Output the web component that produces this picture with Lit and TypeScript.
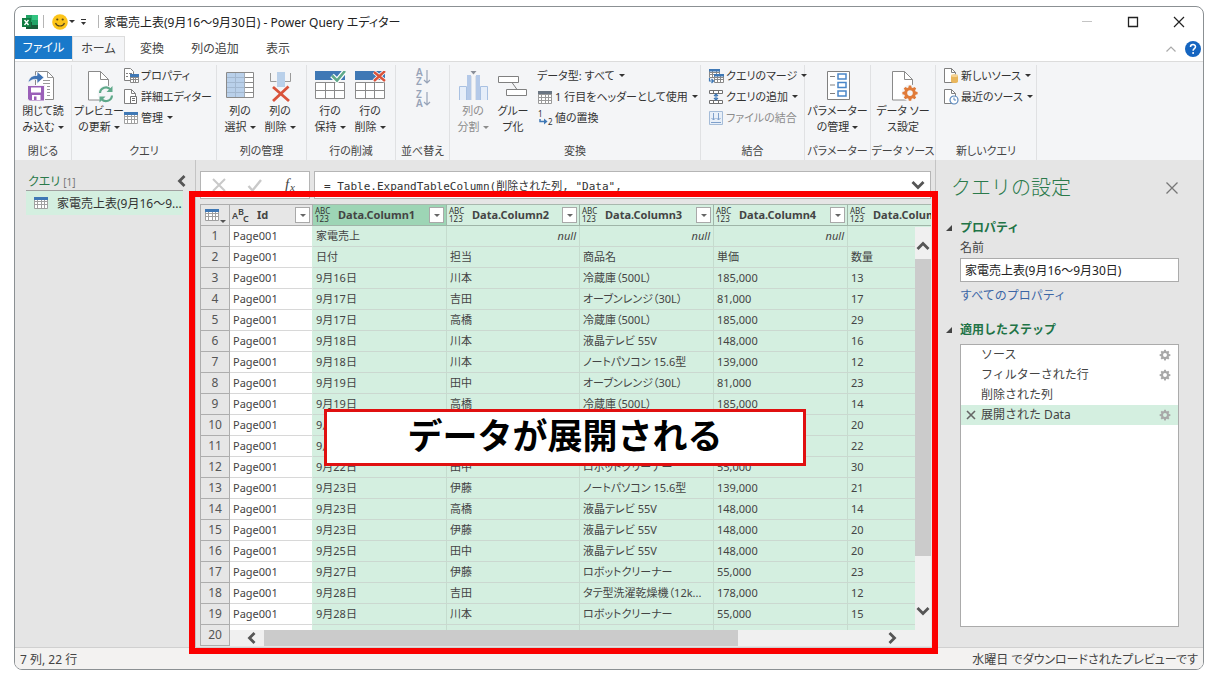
import { LitElement, html, svg, css, nothing } from "lit";
import { customElement, property, state } from "lit/decorators.js";
import { classMap } from "lit/directives/class-map.js";

const grid = (x: number, y: number, w: number, h: number, cols: number, rows: number, stroke = "#8a8a8a") => {
  let d = `M${x} ${y}h${w}v${h}h${-w}z`;
  for (let i = 1; i < cols; i++) d += `M${x + Math.round((w * i) / cols)} ${y}v${h}`;
  for (let i = 1; i < rows; i++) d += `M${x} ${y + Math.round((h * i) / rows)}h${w}`;
  return svg`<path d=${d} fill="#fff" stroke=${stroke}/>`;
};

const gearPath =
  "M6.8 1h2.4l.4 2 1.2.5 1.7-1.1 1.7 1.7-1.1 1.7.5 1.2 2 .4v2.4l-2 .4-.5 1.2 1.1 1.7-1.7 1.7-1.7-1.1-1.2.5-.4 2H6.800l-.4-2-1.200-.5-1.700 1.100-1.700-1.700 1.100-1.700-.5-1.200-2-.4V7.400l2-.4.5-1.200L1.800 4.100l1.700-1.700 1.700 1.100L6.400 3zM8 5.800a2.800 2.800 0 1 0 0 5.600 2.800 2.800 0 0 0 0-5.600z";

const page = svg`<path d="M5.500 .5h12l8 8v20.500h-20z" fill="#fff" stroke="#8a8a8a"/><path d="M17.500 .5v8h8" fill="none" stroke="#8a8a8a"/>`;
const smallPage = svg`<path d="M1.500 .5h7l4 4v10h-11z" fill="#fff" stroke="#808080"/><path d="M8.500 .5v4h4" fill="none" stroke="#808080"/>`;

const big: Record<string, unknown> = {
  close: svg`<path d="M8.500 .5h12l6 6v22h-18z" fill="#fff" stroke="#8a8a8a"/><path d="M20.500 .5v6h6M16 9.500h7M16 12.500h7M20 15.500h3M20 18.500h3M20 21.500h3M20 24.500h3" fill="none" stroke="#9a9a9a"/>
    <path d="M1 12c1-6 5-8 9-7.500V.5l7 6-7 6V8.500c-4-.5-6 .5-9 3.500z" fill="#3f74b5" stroke="#f4f5f7" stroke-width=".8"/>
    <path d="M.5 14.500h17v15.500h-15l-2-2z" fill="#9a5fb8" stroke="#f4f5f7"/><path d="M4 16.500h10v5H4z" fill="#fff"/><path d="M5 24h8.500v5H5z" fill="#fff"/><path d="M7 25.500h2.500V29H7z" fill="#9a5fb8"/>`,
  refresh: svg`${page}<circle cx="23" cy="23" r="8.500" fill="#f4f5f7"/><path d="M17 22a6 6 0 0 1 10.500-3.500M29 24.500a6 6 0 0 1-10.500 3.500" fill="none" stroke="#5fa98a" stroke-width="2.200"/><path d="M29.500 15v6h-6zM16.500 31.500v-6h6z" fill="#5fa98a"/>`,
  choose: svg`${grid(2.5, 1.5, 27, 25, 3, 5)}<path d="M3 2h17.500v24H3z" fill="#b9d0ea"/><path d="M11.500 2v24M3 6.500h17M3 11.500h17M3 16.500h17M3 21.500h17" stroke="#a3b8d0"/>`,
  removeCol: svg`<path d="M6.500 2v8.500h6M26.500 2v8.500h-6" fill="none" stroke="#9a9a9a"/><path d="M13 1h8v15h-8z" fill="#b9d0ea"/><path d="M9 16l16 14M24.500 15.500L9 30" stroke="#d9533b" stroke-width="2.800" fill="none"/>`,
  keepRows: svg`<path d="M1 0h30v9H1z" fill="#3f78b5"/>${grid(1.5, 11.5, 29, 16, 3, 2)}<path d="M18 4.500l5 5L31 0" fill="none" stroke="#fff" stroke-width="5"/><path d="M18 4.500l5 5L31 0" fill="none" stroke="#5fa98a" stroke-width="2.600"/>`,
  removeRows: svg`<path d="M1 0h30v9H1z" fill="#3f78b5"/>${grid(1.5, 11.5, 29, 16, 3, 2)}<path d="M20 1l11 9M31 0L20 10" stroke="#fff" stroke-width="4"/><path d="M20 1l11 9M31 0L20 10" stroke="#d9533b" stroke-width="2.400"/>`,
  split: svg`<path d="M2.500 29V15.500h7V29M23.500 29V15.500h7V29" fill="#e6eef9" stroke="#a9c1e2"/><path d="M10 4h4v25h-4zM19 4h4v25h-4z" fill="#b4c9e8"/><path d="M14.500 5v24M18.500 5v24" stroke="#dce2ea"/><path d="M13.500 0h6l-3 3.500z" fill="#8a8f98"/>`,
  group: svg`<path d="M1.500 5.500h20v6h-20zM9.500 18.500h20v6h-20z" fill="#fff" stroke="#808080"/><path d="M15 11.500l5 7" stroke="#808080"/>`,
  params: svg`<path d="M5.500 .5h22v28h-22z" fill="#fff" stroke="#808080"/><path d="M8 5.500h5M8 14h5M8 22.500h5" stroke="#808080"/><path d="M16 3h8v5h-8zM16 11.500h8v5h-8zM16 20h8v5h-8z" fill="#fff" stroke="#4a86c8" stroke-width="1.500"/>`,
  source: svg`${page}<circle cx="23" cy="22" r="8.500" fill="#f4f5f7"/><g transform="translate(15 13.500)"><path d=${gearPath} fill="#e07b39" fill-rule="evenodd"/></g>`,
};

const small: Record<string, unknown> = {
  props: svg`<path d="M1.500 .5h6l3 3v9h-9z" fill="#fff" stroke="#808080"/><path d="M3 5.500h2M3 8.500h2M6 5.500h3" stroke="#808080"/>${grid(7.5, 6.5, 8, 8, 3, 3)}<path d="M7 6h9v3H7z" fill="#3f78b5"/>`,
  advanced: svg`${smallPage}<path d="M7.500 7.500h6v7h-6z" fill="#fff" stroke="#707070"/><path d="M9 9.500h3M9 11.500h3" stroke="#707070"/>`,
  table: svg`${grid(1.5, 2.5, 13, 11, 4, 3, "#a0a0a0")}<path d="M1 2h14v3H1z" fill="#3f78b5"/>`,
  header: svg`${grid(1.5, 2.5, 13, 12, 4, 4, "#9a9a9a")}<path d="M1 2h14v3H1z" fill="#6b7683"/>`,
  replace: svg`<text x="1" y="7" font-size="8" fill="#333">1</text><text x="11" y="15" font-size="8" fill="#333">2</text><path d="M3 9v2.500h5" fill="none" stroke="#3f78b5" stroke-width="1.500"/><path d="M7 8.500l3.500 3-3.500 3z" fill="#3f78b5"/>`,
  merge: svg`${grid(1.5, 1.5, 10, 8, 3, 3)}<path d="M1 1h11v2.500H1z" fill="#3f78b5"/>${grid(6.5, 6.5, 9, 8, 3, 3)}<path d="M6 6h10v2.500H6z" fill="#3f78b5"/><path d="M1.500 10v3H5M3.500 11l2 2-2 2" fill="none" stroke="#3f78b5" stroke-width="1.200"/>`,
  append: svg`${grid(1.5, 1.5, 13, 3, 3, 1, "#707070")}${grid(1.5, 11.5, 13, 3, 3, 1, "#707070")}<path d="M8 5v6M6 7l2-2 2 2M6 9l2 2 2-2" fill="none" stroke="#3f78b5" stroke-width="1.200"/>`,
  combine: svg`<path d="M1.500 1.500h13v13h-13z" fill="#e8eff8" stroke="#a5bcd8"/><path d="M5.500 3v7M10.500 3v7M3.500 8l2 2 2-2M8.500 8l2 2 2-2M3 12.500h10" fill="none" stroke="#7fa0cb"/>`,
  newSource: svg`${smallPage}<path d="M8 7.500v6c0 2 7 2 7 0v-6z" fill="#e9b65c"/><ellipse cx="11.500" cy="7.500" rx="3.500" ry="1.500" fill="#f5d394"/>`,
  recent: svg`${smallPage}<circle cx="11" cy="11" r="4" fill="#fff" stroke="#5a88bd" stroke-width="1.200"/><path d="M11 8.500V11h2" fill="none" stroke="#5a88bd"/>`,
};

const caret = html`<svg class="caret" viewBox="0 0 6 3" width="6" height="3" aria-hidden="true"><path d="M0 0h6L3 3z" fill="currentColor"/></svg>`;
const icon16 = (body: unknown) => html`<svg viewBox="0 0 16 16" width="16" height="16" aria-hidden="true">${body}</svg>`;

const chevron = (dir: "up" | "down" | "left" | "right") => {
  const d = {
    up: "M1.500 10L7 4.500 12.500 10",
    down: "M1.500 4L7 9.500 12.500 4",
    left: "M9.500 2L4.500 7l5 5",
    right: "M4.500 2l5 5-5 5",
  }[dir];
  return html`<svg viewBox="0 0 14 14" width="14" height="14" aria-hidden="true"><path d=${d} fill="none" stroke="#555" stroke-width="2.800"/></svg>`;
};

const reset = css`
  * { box-sizing: border-box; }
  button, input {
    font: inherit;
    color: inherit;
    background: none;
    border: 0;
    padding: 0;
    margin: 0;
    font-feature-settings: inherit;
  }
  button { white-space: nowrap; }
  svg { display: block; flex: none; }
`;

@customElement("pq-big-button")
class BigButton extends LitElement {
  @property() icon = "";
  @property({ type: Array }) lines: string[] = [];
  @property({ type: Boolean }) menu = false;
  @property({ type: Boolean }) off = false;

  static styles = [reset, css`
    .button {
      display: flex;
      flex-direction: column;
      align-items: center;
      width: 40px;
      line-height: 16px;
      padding-top: 6px;
    }
    .off { color: #8c8c8c; }
    .line { display: flex; align-items: center; gap: 3px; }
  `];

  render() {
    const last = this.lines.length - 1;
    return html`<button class=${classMap({ button: true, off: this.off })} ?disabled=${this.off}>
      <svg viewBox="0 0 32 32" width="32" height="32" aria-hidden="true">${big[this.icon]}</svg>
      ${this.lines.map((t, i) => html`<span class="line">${t}${this.menu && i === last ? caret : nothing}</span>`)}
    </button>`;
  }
}

@customElement("pq-small-button")
class SmallButton extends LitElement {
  @property() icon = "";
  @property() text = "";
  @property({ type: Boolean }) menu = false;
  @property({ type: Boolean }) off = false;

  static styles = [reset, css`
    .button { display: flex; align-items: center; gap: 2px; height: 21px; line-height: 21px; }
    .off { color: #8c8c8c; }
    .text { display: flex; align-items: center; gap: 4px; }
  `];

  render() {
    return html`<button class=${classMap({ button: true, off: this.off })} ?disabled=${this.off}>
      ${this.icon ? icon16(small[this.icon]) : nothing}
      <span class="text">${this.text}${this.menu ? caret : nothing}</span>
    </button>`;
  }
}

@customElement("pq-ribbon")
class Ribbon extends LitElement {
  static styles = [reset, css`
    :host {
      display: grid;
      grid-template-columns: 57px 145px 90px 89px 54px 251px 104px 66px 65px 101px;
      height: 99px;
      background: #f4f5f7;
      border-top: 1px solid #dcdcdc;
      font-size: 11px;
    }
    .group { display: flex; flex-direction: column; border-right: 1px solid #e0e1e3; margin-top: 3px; }
    .tools { flex: 1; display: flex; justify-content: center; }
    .start { justify-content: flex-start; padding-left: 7px; }
    .pair { justify-content: flex-start; padding-left: 3px; }
    .stack { display: flex; flex-direction: column; padding-left: 4px; }
    .name { text-align: center; line-height: 18px; color: #444; white-space: nowrap; }
    .sort { padding-top: 2px; display: flex; flex-direction: column; }
  `];

  private sort(a: string, b: string, label: string) {
    return html`<button class="sort" aria-label=${label}>
      <svg viewBox="0 0 16 20" width="16" height="20" font-size="10" font-weight="600" fill="#97a3b8" aria-hidden="true">
        <text x="1" y="9">${a}</text><text x="1" y="18">${b}</text>
        <path d="M12 3v13M9 13l3 3 3-3" fill="none" stroke="#97a3b8" stroke-width="1.200"/>
      </svg></button>`;
  }

  render() {
    return html`
      <div class="group"><div class="tools">
        <pq-big-button icon="close" menu .lines=${["閉じて読", "み込む"]}></pq-big-button>
      </div><div class="name">閉じる</div></div>
      <div class="group"><div class="tools start">
        <pq-big-button icon="refresh" menu .lines=${["プレビュー", "の更新"]}></pq-big-button>
        <div class="stack">
          <pq-small-button icon="props" text="プロパティ"></pq-small-button>
          <pq-small-button icon="advanced" text="詳細エディター"></pq-small-button>
          <pq-small-button icon="table" text="管理" menu></pq-small-button>
        </div>
      </div><div class="name">クエリ</div></div>
      <div class="group"><div class="tools pair">
        <pq-big-button icon="choose" menu .lines=${["列の", "選択"]}></pq-big-button>
        <pq-big-button icon="removeCol" menu .lines=${["列の", "削除"]}></pq-big-button>
      </div><div class="name">列の管理</div></div>
      <div class="group"><div class="tools pair">
        <pq-big-button icon="keepRows" menu .lines=${["行の", "保持"]}></pq-big-button>
        <pq-big-button icon="removeRows" menu .lines=${["行の", "削除"]}></pq-big-button>
      </div><div class="name">行の削減</div></div>
      <div class="group"><div class="tools"><div>
        ${this.sort("A", "Z", "昇順で並べ替え")}${this.sort("Z", "A", "降順で並べ替え")}
      </div></div><div class="name">並べ替え</div></div>
      <div class="group"><div class="tools pair">
        <pq-big-button icon="split" menu off .lines=${["列の", "分割"]}></pq-big-button>
        <pq-big-button icon="group" .lines=${["グルー", "プ化"]}></pq-big-button>
        <div class="stack">
          <pq-small-button text="データ型: すべて" menu></pq-small-button>
          <pq-small-button icon="header" text="1 行目をヘッダーとして使用" menu></pq-small-button>
          <pq-small-button icon="replace" text="値の置換"></pq-small-button>
        </div>
      </div><div class="name">変換</div></div>
      <div class="group"><div class="tools start"><div>
          <pq-small-button icon="merge" text="クエリのマージ" menu></pq-small-button>
          <pq-small-button icon="append" text="クエリの追加" menu></pq-small-button>
          <pq-small-button icon="combine" text="ファイルの結合" off></pq-small-button>
        </div>
      </div><div class="name">結合</div></div>
      <div class="group"><div class="tools">
        <pq-big-button icon="params" menu .lines=${["パラメーター", "の管理"]}></pq-big-button>
      </div><div class="name">パラメーター</div></div>
      <div class="group"><div class="tools">
        <pq-big-button icon="source" .lines=${["データ ソー", "ス設定"]}></pq-big-button>
      </div><div class="name">データ ソース</div></div>
      <div class="group"><div class="tools start"><div>
          <pq-small-button icon="newSource" text="新しいソース" menu></pq-small-button>
          <pq-small-button icon="recent" text="最近のソース" menu></pq-small-button>
        </div>
      </div><div class="name">新しいクエリ</div></div>`;
  }
}

type Row = [string | null, string | null, string | null, string | null, string | null];
const rows: Row[] = [
  ["家電売上", null, null, null, ""],
  ["日付", "担当", "商品名", "単価", "数量"],
  ["9月16日", "川本", "冷蔵庫（500L）", "185,000", "13"],
  ["9月17日", "吉田", "オーブンレンジ（30L）", "81,000", "17"],
  ["9月17日", "高橋", "冷蔵庫（500L）", "185,000", "29"],
  ["9月18日", "川本", "液晶テレビ 55V", "148,000", "16"],
  ["9月18日", "川本", "ノートパソコン 15.6型", "139,000", "12"],
  ["9月19日", "田中", "オーブンレンジ（30L）", "81,000", "23"],
  ["9月19日", "高橋", "冷蔵庫（500L）", "185,000", "14"],
  ["9月20日", "", "", "", "20"],
  ["9月21日", "", "", "", "22"],
  ["9月22日", "田中", "ロボットクリーナー", "55,000", "30"],
  ["9月23日", "伊藤", "ノートパソコン 15.6型", "139,000", "21"],
  ["9月23日", "高橋", "液晶テレビ 55V", "148,000", "14"],
  ["9月23日", "伊藤", "液晶テレビ 55V", "148,000", "20"],
  ["9月25日", "田中", "液晶テレビ 55V", "148,000", "20"],
  ["9月27日", "伊藤", "ロボットクリーナー", "55,000", "23"],
  ["9月28日", "吉田", "タテ型洗濯乾燥機（12k...", "178,000", "12"],
  ["9月28日", "川本", "ロボットクリーナー", "55,000", "15"],
  ["", "", "", "", ""],
];

@customElement("pq-grid")
class Grid extends LitElement {
  static styles = [reset, css`
    :host { position: relative; display: block; overflow: hidden; font-size: 11px; }
    .table {
      table-layout: fixed;
      width: 782px;
      height: 100%;
      border-collapse: separate;
      border-spacing: 0;
      color: #444;
    }
    .num { width: 30px; }
    .id { width: 83px; }
    .data { width: 134px; }
    .narrow { width: 133px; }
    th, td {
      height: 20px;
      line-height: 18px;
      padding: 0 3px;
      white-space: nowrap;
      overflow: hidden;
      text-overflow: ellipsis;
      text-align: left;
      border-right: 1px solid #c5dcce;
      border-bottom: 1px solid #cbd8d0;
      background: #d4efe0;
    }
    thead th { height: 22px; border-color: #9fb5a8; border-top: 1px solid #a8b8ae; padding: 0 2px; color: #444; }
    .first { background: #9dd5b5; }
    .plain { background: #e6e6e6; border-color: #adadad; }
    .rownum { background: #e6e6e6; border-color: #adadad; border-left: 1px solid #adadad; text-align: center; font-weight: 400; font-size: 12px; padding: 0; color: #555; }
    .idcell { background: #fff; border-right-color: #d4efe0; border-bottom-color: #d8d8d8; }
    .null { text-align: right; font-style: italic; }
    .head { display: flex; align-items: center; gap: 6px; }
    .type { width: 17px; flex: none; font-size: 8px; line-height: 8px; font-weight: 400; color: #333; }
    .abc { width: 19px; flex: none; font-size: 9px; font-weight: 600; color: #333; }
    .label { flex: 1; }
    .filter { width: 15px; height: 16px; display: grid; place-items: center; background: #fff; border: 1px solid #a9a9a9; color: #666; }
    .corner { display: flex; align-items: flex-end; width: 100%; justify-content: center; color: #555; }
    .vbar, .hbar { position: absolute; display: flex; align-items: center; background: #f0f0f0; }
    .vbar { top: 23px; right: 0; bottom: 16px; width: 16px; flex-direction: column; padding: 12px 0; }
    .hbar { left: 30px; right: 0; bottom: 0; height: 16px; padding: 0 32px 0 15px; }
    .vtrack { flex: 1; align-self: stretch; margin: 6px 0 0; }
    .vthumb { height: 86%; background: #cbcbcb; }
    .htrack { flex: 1; align-self: stretch; margin: 0 5px; }
    .hthumb { width: 77%; height: 100%; background: #cbcbcb; }
  `];

  private filter(name: string) {
    return html`<button class="filter" aria-label=${name + " フィルター"}>${caret}</button>`;
  }

  render() {
    return html`
      <table class="table">
        <colgroup><col class="num"><col class="id"><col class="data"><col class="narrow"><col class="data"><col class="data"><col class="data"></colgroup>
        <thead><tr>
          <th class="rownum"><button class="corner" aria-label="テーブル メニュー">${icon16(small.table)}${caret}</button></th>
          <th class="plain"><div class="head">
            <svg class="abc" viewBox="0 0 19 18" height="18" fill="#444" aria-hidden="true"><text x="0" y="13">A</text><text x="6" y="9">B</text><text x="11" y="16">C</text></svg>
            <span class="label">Id</span>${this.filter("Id")}</div></th>
          ${[1, 2, 3, 4, 5].map((n) => html`<th class=${classMap({ first: n === 1 })}><div class="head">
            <span class="type">ABC<br>123</span><span class="label">Data.Column${n}</span>${this.filter("Data.Column" + n)}</div></th>`)}
        </tr></thead>
        <tbody>
          ${rows.map((r, i) => html`<tr>
            <th class="rownum" scope="row">${i + 1}</th>
            <td class="idcell">${i < 19 ? "Page001" : ""}</td>
            ${r.map((v) => html`<td class=${classMap({ null: v === null })}>${v ?? "null"}</td>`)}
          </tr>`)}
        </tbody>
      </table>
      <div class="vbar">${chevron("up")}<div class="vtrack"><div class="vthumb"></div></div>${chevron("down")}</div>
      <div class="hbar">${chevron("left")}<div class="htrack"><div class="hthumb"></div></div>${chevron("right")}</div>`;
  }
}

@customElement("pq-settings")
class Settings extends LitElement {
  @state() private selected = 3;
  private steps = [
    { text: "ソース", gear: true },
    { text: "フィルターされた行", gear: true },
    { text: "削除された列", gear: false },
    { text: "展開された Data", gear: true },
  ];

  static styles = [reset, css`
    :host { display: flex; flex-direction: column; padding: 14px 24px 20px 24px; color: #444; font-feature-settings: normal; }
    .top { display: flex; justify-content: space-between; align-items: center; margin-left: -9px; line-height: 28px; }
    .title { margin: 0; font-size: 20px; font-weight: 300; color: #2b7a4b; }
    .section { display: flex; align-items: center; margin: 0 0 0 -14px; gap: 7px; font-size: 12px; font-weight: 700; color: #217346; line-height: 20px; }
    .props { padding-top: 16px; height: 36px; }
    .field { line-height: 20px; }
    .name { height: 24px; border: 1px solid #ababab; background: #fff; padding: 0 4px; color: #222; width: 100%; }
    .link { color: #3b66a5; text-decoration: none; line-height: 28px; }
    .applied { padding: 10px 0 4px; }
    .list { flex: 1; list-style: none; margin: 0; padding: 0; background: #fff; border: 1px solid #ababab; }
    .step { display: flex; align-items: center; height: 20px; line-height: 18px; padding: 0 7px 0 5px; }
    .sel { background: #d4efe0; }
    .del { width: 15px; display: block; }
    .text { flex: 1; text-align: left; height: 20px; }
  `];

  render() {
    const tri = html`<svg viewBox="0 0 7 7" width="7" height="7" aria-hidden="true"><path d="M6 0v6H0z" fill="#444"/></svg>`;
    return html`
      <div class="top"><h1 class="title">クエリの設定</h1>
        <button aria-label="閉じる"><svg viewBox="0 0 14 14" width="14" height="14"><path d="M1.500 1.500l11 11M12.500 1.500l-11 11" stroke="#777" stroke-width="1.300"/></svg></button></div>
      <h2 class="section props">${tri}プロパティ</h2>
      <label class="field" for="name">名前</label>
      <input class="name" id="name" value="家電売上表(9月16～9月30日)">
      <a class="link" href="#properties">すべてのプロパティ</a>
      <h2 class="section applied">${tri}適用したステップ</h2>
      <ul class="list">
        ${this.steps.map((s, i) => html`<li class=${classMap({ step: true, sel: i === this.selected })}>
          <span class="del">${i === this.selected ? html`<svg viewBox="0 0 10 10" width="10" height="10"><path d="M1 1l8 8M9 1L1 9" stroke="#666" stroke-width="1.600"/></svg>` : nothing}</span>
          <button class="text" @click=${() => (this.selected = i)}>${s.text}</button>
          ${s.gear ? html`<button aria-label=${s.text + " の設定"}><svg viewBox="0 0 16 17" width="12" height="12"><path d=${gearPath} fill="#a8a8a8" fill-rule="evenodd"/></svg></button>` : nothing}
        </li>`)}
      </ul>`;
  }
}

@customElement("app-root")
class AppRoot extends LitElement {
  static styles = [reset, css`
    :host {
      display: flex;
      height: 100vh;
      padding: 6px 12px 7px 14px;
      box-sizing: border-box;
      background: #fff;
      color: #333;
      font: 12px "Noto Sans", "Noto Sans CJK JP", sans-serif;
      font-feature-settings: "palt";
    }
    .window {
      flex: 1;
      min-width: 0;
      display: flex;
      flex-direction: column;
      border: 1px solid #8b9093;
      border-radius: 8px;
      background: #fff;
      overflow: hidden;
    }
    .titlebar { display: flex; align-items: center; height: 29px; padding: 0 18px 0 7px; gap: 5px; }
    .rule { width: 1px; height: 13px; background: #b5b5b5; }
    .quick { display: flex; align-items: center; gap: 4px; padding: 0 5px 0 3px; }
    .face { display: flex; align-items: center; gap: 1px; }
    .title { flex: 1; color: #222; white-space: nowrap; }
    .controls { display: flex; align-items: center; gap: 34px; }
    .tabs { display: grid; grid-template-columns: 57px 53px 54px 72px 54px 1fr; height: 25px; }
    .tab { text-align: center; line-height: 26px; color: #444; text-decoration: none; white-space: nowrap; }
    .file { background: #1979ca; color: #fff; height: 23px; line-height: 23px; }
    .home { background: #f4f5f7; border: 1px solid #dcdcdc; border-bottom: 0; line-height: 24px; }
    .right { display: flex; justify-content: flex-end; align-items: center; gap: 8px; padding-right: 2px; }
    .work { flex: 1; min-height: 0; display: grid; grid-template-columns: 181px minmax(0, 1fr) 268px; background: #e5e5e5; }
    .queries { border-right: 1px solid #c4c4c4; padding: 12px 12px 0 11px; }
    .qhead { display: flex; justify-content: space-between; align-items: center; height: 18px; margin: 0 -6px 0 2px; color: #2b7a4b; }
    .count { color: #777; font-size: 10px; }
    .query { display: flex; align-items: center; gap: 8px; width: 100%; height: 25px; padding-left: 7px; background: #d4efe0; border-top: 1px solid #a0a0a0; }
    .center { position: relative; display: flex; flex-direction: column; gap: 5px; padding: 11px 4px 1px; }
    .bar { display: flex; gap: 4px; height: 28px; }
    .actions { display: flex; align-items: center; justify-content: space-around; width: 110px; background: #fff; border: 1px solid #b5b5b5; }
    .formula { flex: 1; display: flex; align-items: center; background: #fff; border: 1px solid #b5b5b5; padding: 0 5px 0 9px; }
    .expr { flex: 1; min-width: 0; height: 22px; font: 11px "DejaVu Sans Mono", "Noto Sans CJK JP", monospace; color: #333; font-feature-settings: normal; }
    .grid { flex: 1; min-height: 0; }
    .frame { position: absolute; inset: 31px -3px -7px -7px; border: 6px solid #fb0000; pointer-events: none; z-index: 2; }
    .note {
      position: absolute;
      z-index: 3;
      left: 128px;
      top: 249px;
      width: 482px;
      height: 57px;
      margin: 0;
      border: 3px solid #e01010;
      background: #fff;
      color: #000;
      text-align: center;
      font-size: 35px;
      font-weight: 700;
      line-height: 48px;
      font-feature-settings: normal;
    }
    .settings { border-left: 1px solid #c4c4c4; }
    .status { display: flex; justify-content: space-between; align-items: center; height: 22px; padding: 0 5px; background: #f3f2f1; border-top: 1px solid #d0d0d0; color: #444; }
  `];

  render() {
    return html`
      <div class="window">
        <header class="titlebar">
          <svg viewBox="0 0 16 16" width="16" height="16" aria-hidden="true"><path d="M4 1h12v14H4z" fill="#21a366"/><path d="M10 1h6v5h-6z" fill="#33c481"/><path d="M4 8h6v7H4zM10 11h6v4h-6z" fill="#185c37"/><path d="M0 4h9v9H0z" fill="#107c41"/><path d="M2.500 6l4 5M6.500 6l-4 5" stroke="#fff" stroke-width="1.400"/></svg>
          <span class="rule"></span>
          <div class="quick">
            <button class="face" aria-label="フィードバック"><svg viewBox="0 0 16 16" width="16" height="16"><circle cx="8" cy="8" r="7.800" fill="#fcc419"/><circle cx="5.300" cy="5.500" r="1.100" fill="#5b4a1b"/><circle cx="10.700" cy="5.500" r="1.100" fill="#5b4a1b"/><path d="M3.500 9c1.500 4 7.500 4 9 0" fill="none" stroke="#5b4a1b" stroke-width="1.200"/></svg>${caret}</button>
            <button aria-label="クイック アクセス"><svg viewBox="0 0 9 8" width="9" height="8"><path d="M2 1.500h5" stroke="#333"/><path d="M2 4h5L4.500 7z" fill="#333"/></svg></button>
          </div>
          <span class="rule"></span>
          <span class="title">家電売上表(9月16～9月30日) - Power Query エディター</span>
          <div class="controls">
            <button aria-label="最小化"><svg viewBox="0 0 12 12" width="12" height="12"><path d="M1 5.500h10" stroke="#c4c4c4"/></svg></button>
            <button aria-label="最大化"><svg viewBox="0 0 12 12" width="12" height="12"><path d="M1.500 1.500h9v9h-9z" fill="none" stroke="#222" stroke-width="1.300"/></svg></button>
            <button aria-label="閉じる"><svg viewBox="0 0 12 12" width="12" height="12"><path d="M1 1l10 10M11 1L1 11" stroke="#222" stroke-width="1.200"/></svg></button>
          </div>
        </header>
        <nav class="tabs">
          <a class="tab file" href="#file">ファイル</a>
          <a class="tab home" href="#home">ホーム</a>
          <a class="tab" href="#transform">変換</a>
          <a class="tab" href="#add">列の追加</a>
          <a class="tab" href="#view">表示</a>
          <div class="right">
            <button aria-label="リボンを折りたたむ"><svg viewBox="0 0 12 12" width="12" height="12"><path d="M1.500 8.500L6 4l4.500 4.500" fill="none" stroke="#aaa" stroke-width="1.200"/></svg></button>
            <button aria-label="ヘルプ"><svg viewBox="0 0 16 16" width="16" height="16"><circle cx="8" cy="8" r="8" fill="#1565c0"/><path d="M5.500 6c0-3.200 5-3.200 5-.2 0 1.800-2.400 1.900-2.400 4" fill="none" stroke="#fff" stroke-width="1.500"/><circle cx="8.100" cy="12" r="1" fill="#fff"/></svg></button>
          </div>
        </nav>
        <pq-ribbon></pq-ribbon>
        <main class="work">
          <aside class="queries">
            <div class="qhead"><span>クエリ <span class="count">[1]</span></span>
              <button aria-label="折りたたむ">${chevron("left")}</button></div>
            <button class="query">${icon16(small.table)}<span>家電売上表(9月16～9...</span></button>
          </aside>
          <section class="center">
            <div class="bar">
              <div class="actions">
                <button aria-label="取り消し"><svg viewBox="0 0 16 16" width="16" height="16"><path d="M2 2l12 12M14 2L2 14" stroke="#c9c9c9" stroke-width="2"/></svg></button>
                <button aria-label="確定"><svg viewBox="0 0 16 16" width="16" height="16"><path d="M1.500 9l4 4.500L14 3" fill="none" stroke="#c9c9c9" stroke-width="2.400"/></svg></button>
                <button aria-label="関数"><svg viewBox="0 0 16 16" width="16" height="16" font-family="Liberation Serif" font-style="italic" fill="#444"><text x="2" y="12" font-size="15">f</text><text x="7" y="14" font-size="11">x</text></svg></button>
              </div>
              <div class="formula">
                <input class="expr" aria-label="数式" value='= Table.ExpandTableColumn(削除された列, "Data",'>
                <button aria-label="展開">${chevron("down")}</button>
              </div>
            </div>
            <pq-grid class="grid"></pq-grid>
            <div class="frame"></div>
            <p class="note">データが展開される</p>
          </section>
          <pq-settings class="settings"></pq-settings>
        </main>
        <footer class="status"><span>7 列, 22 行</span><span>水曜日 でダウンロードされたプレビューです</span></footer>
      </div>`;
  }
}
